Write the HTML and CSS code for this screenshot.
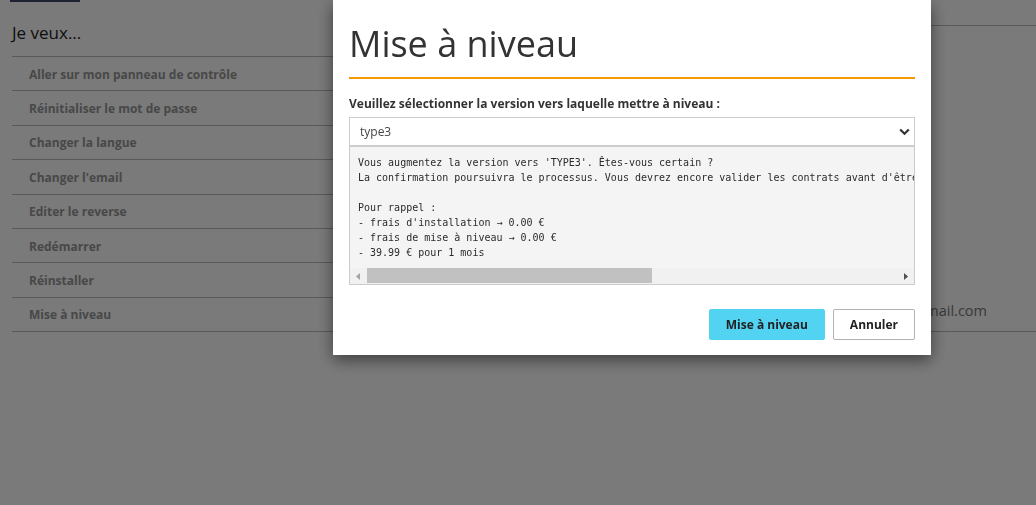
FILE: index.html
```html
<!DOCTYPE html>
<html lang="fr">
<head>
<meta charset="utf-8">
<title>Mise à niveau</title>
<link rel="stylesheet" href="styles.css">
</head>
<body>
<div class="page">
  <div class="tabbar"><span class="tab-active"></span></div>
  <div class="layout">
    <section class="actions">
      <h3 class="actions-title">Je veux...</h3>
      <ul class="action-list">
        <li>Aller sur mon panneau de contrôle</li>
        <li>Réinitialiser le mot de passe</li>
        <li>Changer la langue</li>
        <li>Changer l'email</li>
        <li>Editer le reverse</li>
        <li>Redémarrer</li>
        <li>Réinstaller</li>
        <li>Mise à niveau</li>
      </ul>
    </section>
    <section class="details">
      <div class="detail-row">
        <span class="detail-label">Email</span>
        <span class="detail-value">contact@hotmail.com</span>
      </div>
    </section>
  </div>
</div>

<div class="overlay">
  <div class="modal">
    <h1 class="modal-title">Mise à niveau</h1>
    <label class="field-label" for="version">Veuillez sélectionner la version vers laquelle mettre à niveau :</label>
    <div class="select-wrap">
      <select id="version" class="select">
        <option>type3</option>
      </select>
      <svg class="chevron" width="11" height="8" viewBox="0 0 11 8"><path d="M1.2 1.5 L5.5 5.8 L9.8 1.5" fill="none" stroke="#333" stroke-width="2.2"/></svg>
    </div>
    <div class="output">
      <pre class="output-text">Vous augmentez la version vers 'TYPE3'. Êtes-vous certain ?
La confirmation poursuivra le processus. Vous devrez encore valider les contrats avant d'être mis à niveau.

Pour rappel :
- frais d'installation → 0.00 €
- frais de mise à niveau → 0.00 €
- 39.99 € pour 1 mois</pre>
      <div class="hscroll">
        <span class="hscroll-btn"><svg width="4" height="7" viewBox="0 0 4 7"><path d="M4 0 L0 3.5 L4 7Z" fill="#a3a3a3"/></svg></span>
        <span class="hscroll-track"><span class="hscroll-thumb"></span></span>
        <span class="hscroll-btn"><svg width="4" height="7" viewBox="0 0 4 7"><path d="M0 0 L4 3.5 L0 7Z" fill="#505050"/></svg></span>
      </div>
    </div>
    <div class="modal-actions">
      <button class="btn btn-primary">Mise à niveau</button>
      <button class="btn btn-default">Annuler</button>
    </div>
  </div>
</div>
</body>
</html>
```

FILE: styles.css
```css
* { box-sizing: border-box; }

html, body {
  margin: 0;
  padding: 0;
  height: 100%;
  background: #fff;
  font-family: "Open Sans", "Liberation Sans", sans-serif;
  overflow: hidden;
}

.page {
  padding-left: 12px;
}

.tabbar {
  height: 2px;
}

.tab-active {
  display: block;
  margin-left: -2px;
  width: 70px;
  height: 2px;
  background: #3e4964;
}

.layout {
  display: grid;
  grid-template-columns: 508px 1fr;
  column-gap: 20px;
  align-items: stretch;
}

.actions-title {
  margin: 19px 0 11px;
  font-size: 17px;
  line-height: 24px;
  font-weight: 400;
  color: #222;
}

.action-list {
  list-style: none;
  margin: 0;
  padding: 0;
  border-top: 1px solid #bbb;
}

.action-list li {
  display: flex;
  align-items: center;
  height: 34.375px;
  padding: 1px 0 0 17px;
  border-bottom: 1px solid #bbb;
  font-size: 12px;
  font-weight: 700;
  color: #969696;
}

.details {
  margin-top: 23px;
  border-top: 1px solid #bbb;
  border-bottom: 1px solid #bbb;
  display: flex;
  flex-direction: column;
  justify-content: flex-end;
}

.detail-row {
  display: flex;
  justify-content: space-between;
  padding: 0 49px 11px 0;
  font-size: 14.5px;
  line-height: 18px;
  color: #777;
}

.overlay {
  position: fixed;
  inset: 0;
  background: rgba(0, 0, 0, 0.52);
}

.modal {
  position: absolute;
  left: 333px;
  top: 0;
  width: 598px;
  padding: 0 16px 15px;
  background: #fff;
  box-shadow: 0 5px 15px rgba(0, 0, 0, 0.5);
}

.modal-title {
  margin: 0;
  padding: 24px 0 13px;
  border-bottom: 2px solid #f59a00;
  font-size: 36px;
  line-height: 40px;
  font-weight: 400;
  color: #333;
}

.field-label {
  display: block;
  margin: 16px 0 5px;
  font-size: 12px;
  line-height: 17px;
  font-weight: 700;
  color: #333;
}

.select-wrap {
  position: relative;
}

.select {
  display: block;
  width: 100%;
  height: 29px;
  margin: 0;
  padding: 0 30px 0 10px;
  border: 1px solid #ccc;
  border-radius: 0;
  background: #fff;
  font-family: "Open Sans", "Liberation Sans", sans-serif;
  font-size: 12px;
  color: #444;
  appearance: none;
  -webkit-appearance: none;
}

.chevron {
  position: absolute;
  right: 5px;
  top: 11px;
  pointer-events: none;
}

.output {
  border: 1px solid #ccc;
  background: #f4f4f4;
}

.output-text {
  margin: 0;
  padding: 8px;
  overflow: hidden;
  white-space: pre;
  font-family: "DejaVu Sans Mono", "Liberation Mono", monospace;
  font-size: 10px;
  line-height: 15px;
  color: #2b2b2b;
}

.hscroll {
  display: flex;
  height: 16px;
  background: #f1f1f1;
}

.hscroll-btn {
  display: flex;
  align-items: center;
  justify-content: center;
  width: 16px;
  flex: none;
}

.hscroll-track {
  flex: 1;
  display: flex;
  padding: 0 1px 1px;
}

.hscroll-thumb {
  width: 285px;
  background: #c1c1c1;
}

.modal-actions {
  display: flex;
  justify-content: flex-end;
  gap: 8px;
  margin-top: 24px;
}

.btn {
  height: 31px;
  padding: 0 16px;
  border-radius: 2px;
  font-family: "Open Sans", "Liberation Sans", sans-serif;
  font-size: 12px;
  font-weight: 700;
  color: #222;
  cursor: pointer;
}

.btn-primary {
  background: #52d3f2;
  border: 1px solid #52d3f2;
}

.btn-default {
  background: #fff;
  border: 1px solid #b3b3b3;
}
```
